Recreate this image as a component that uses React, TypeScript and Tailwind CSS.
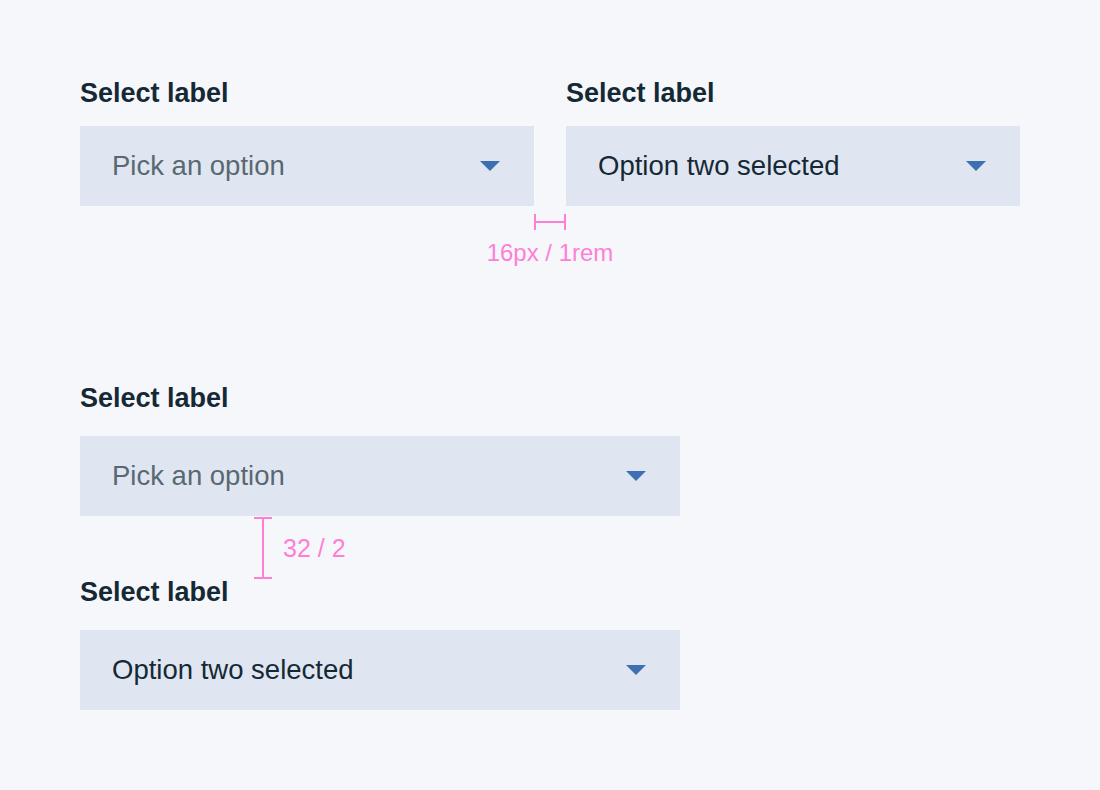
const FONT = "font-['Liberation_Sans',Arial,sans-serif]";

function Caret() {
    return (
        <svg width="20" height="10" viewBox="0 0 20 10" className="shrink-0">
            <path d="M0 0h20L10 10z" fill="#3d70b2" />
        </svg>
    );
}

function Select({ value, placeholder }: { value?: string; placeholder: string }) {
    return (
        <div className="flex h-20 items-center justify-between bg-[#dfe6f1] pl-8 pr-[34px]">
            <span className={`text-[27.5px] ${value ? 'text-[#152935]' : 'text-[#5a6872]'}`}>
                {value ?? placeholder}
            </span>
            <Caret />
        </div>
    );
}

function Label() {
    return <div className="text-[27px] font-bold leading-[30px] text-[#152935]">Select label</div>;
}

export default function App() {
    return (
        <div className={`min-h-[790px] w-[1100px] bg-[#f5f7fb] pl-20 pt-[78px] ${FONT}`}>
            {/* horizontal pair */}
            <div className="flex w-[940px] gap-8">
                <div className="flex-1">
                    <Label />
                    <div className="mt-[18px]">
                        <Select placeholder="Pick an option" />
                    </div>
                </div>
                <div className="flex-1">
                    <Label />
                    <div className="mt-[18px]">
                        <Select placeholder="Pick an option" value="Option two selected" />
                    </div>
                </div>
            </div>

            <div className="flex w-[940px] flex-col items-center pt-2">
                <div className="flex h-4 w-8 items-center justify-between">
                    <span className="h-4 w-0.5 bg-[#ff7fd6]" />
                    <span className="h-0.5 flex-1 bg-[#ff7fd6]" />
                    <span className="h-4 w-0.5 bg-[#ff7fd6]" />
                </div>
                <div className="mt-[11px] text-[24px] leading-6 text-[#ff7fd6]">16px / 1rem</div>
            </div>

            {/* stacked pair */}
            <div className="mt-[118px] w-[600px]">
                <Label />
                <div className="mt-[23px]">
                    <Select placeholder="Pick an option" />
                </div>
                <div className="mt-px flex h-[62px] items-center pl-[174px]">
                    <div className="flex h-[62px] w-[18px] flex-col items-center justify-between">
                        <span className="h-0.5 w-[18px] bg-[#ff7fd6]" />
                        <span className="w-0.5 flex-1 bg-[#ff7fd6]" />
                        <span className="h-0.5 w-[18px] bg-[#ff7fd6]" />
                    </div>
                    <span className="ml-[11px] text-[25px] leading-6 text-[#ff7fd6]">32 / 2</span>
                </div>
                <div className="-mt-0.5">
                    <Label />
                </div>
                <div className="mt-[23px]">
                    <Select placeholder="Pick an option" value="Option two selected" />
                </div>
            </div>
        </div>
    );
}
